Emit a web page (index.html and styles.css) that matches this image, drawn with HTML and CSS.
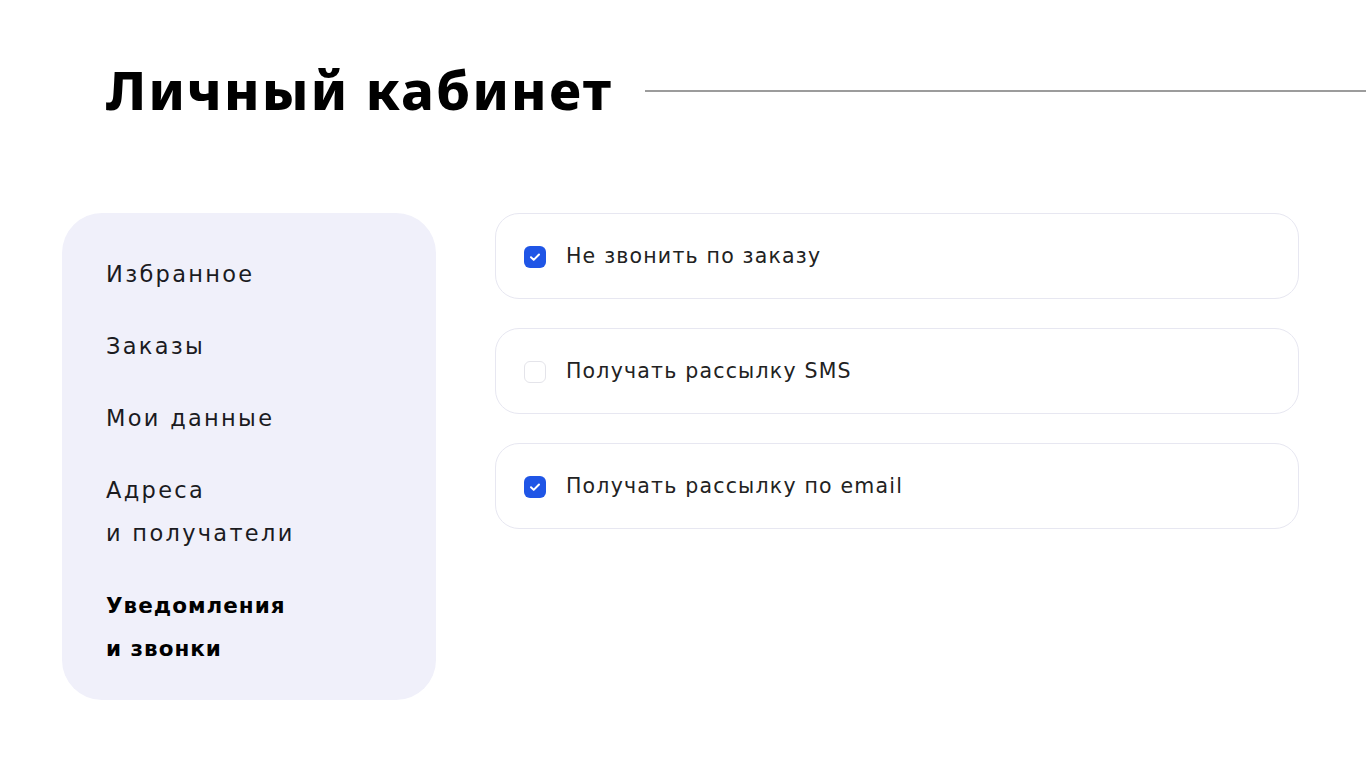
FILE: index.html
```html
<!DOCTYPE html>
<html>
<head>
    <title>Личный кабинет</title>
    <link rel="stylesheet" href="styles.css">
</head>
<body>
    <header class="page-head">
        <h1>Личный кабинет</h1>
        <div class="head-rule"></div>
    </header>
    <main class="cabinet">
        <nav class="side-menu">
            <a href="#">Избранное</a>
            <a href="#">Заказы</a>
            <a href="#">Мои данные</a>
            <a href="#">Адреса<br>и получатели</a>
            <a href="#" class="active">Уведомления<br>и звонки</a>
        </nav>
        <section class="settings">
            <label class="option">
                <input type="checkbox" checked>
                <span class="box"></span>
                <span class="option-text">Не звонить по заказу</span>
            </label>
            <label class="option">
                <input type="checkbox">
                <span class="box"></span>
                <span class="option-text">Получать рассылку SMS</span>
            </label>
            <label class="option">
                <input type="checkbox" checked>
                <span class="box"></span>
                <span class="option-text">Получать рассылку по email</span>
            </label>
        </section>
    </main>
</body>
</html>
```
FILE: styles.css
```css
:root {
    --text-color: #1b1b1f;
    --menu-bg: #f0f0fa;
    --card-border: #e7e7f1;
    --check-blue: #1f55e6;
    --rule-color: #9c9c9c;
}

body {
    margin: 0;
    font-family: 'DejaVu Sans', 'Noto Sans', sans-serif;
    color: var(--text-color);
    background-color: #fff;
}

.page-head {
    display: flex;
    align-items: center;
    padding: 56px 0 0 106px;
    height: 66px;
}

h1 {
    margin: 0;
    font-family: 'Noto Sans', 'DejaVu Sans', sans-serif;
    font-size: 54px;
    font-weight: 800;
    letter-spacing: 2.3px;
    line-height: 66px;
    color: #000;
}

.head-rule {
    flex: 1;
    height: 2px;
    margin-left: 32px;
    margin-top: 4px;
    background-color: var(--rule-color);
}

.cabinet {
    display: flex;
    align-items: flex-start;
    gap: 59px;
    padding: 91px 0 0 62px;
}

.side-menu {
    width: 374px;
    box-sizing: border-box;
    padding: 40px 20px 30px 44px;
    background-color: var(--menu-bg);
    border-radius: 40px;
    display: flex;
    flex-direction: column;
    gap: 29px;
}

.side-menu a {
    color: var(--text-color);
    text-decoration: none;
    font-size: 22.5px;
    letter-spacing: 2.3px;
    line-height: 43px;
}

.side-menu a.active {
    font-weight: 700;
    font-size: 21.5px;
    letter-spacing: 1px;
    color: #000;
}

.settings {
    width: 804px;
    display: flex;
    flex-direction: column;
    gap: 29px;
}

.option {
    display: flex;
    align-items: center;
    height: 86px;
    box-sizing: border-box;
    padding: 0 0 0 28px;
    border: 1.5px solid var(--card-border);
    border-radius: 24px;
    cursor: pointer;
}

.option input {
    display: none;
}

.box {
    width: 22px;
    height: 22px;
    box-sizing: border-box;
    border: 1.5px solid #e4e4ea;
    border-radius: 6px;
    margin-top: 1px;
    flex-shrink: 0;
}

.option input:checked + .box {
    border: none;
    background-color: var(--check-blue);
    background-image: url("data:image/svg+xml,%3Csvg xmlns='http://www.w3.org/2000/svg' viewBox='0 0 22 22'%3E%3Cpath d='M7 11.3l2.7 2.6 5.3-5.4' fill='none' stroke='%23fff' stroke-width='2' stroke-linecap='round' stroke-linejoin='round'/%3E%3C/svg%3E");
}

.option-text {
    margin-left: 20px;
    font-size: 20.5px;
    letter-spacing: 1.2px;
    color: #222;
}
```
